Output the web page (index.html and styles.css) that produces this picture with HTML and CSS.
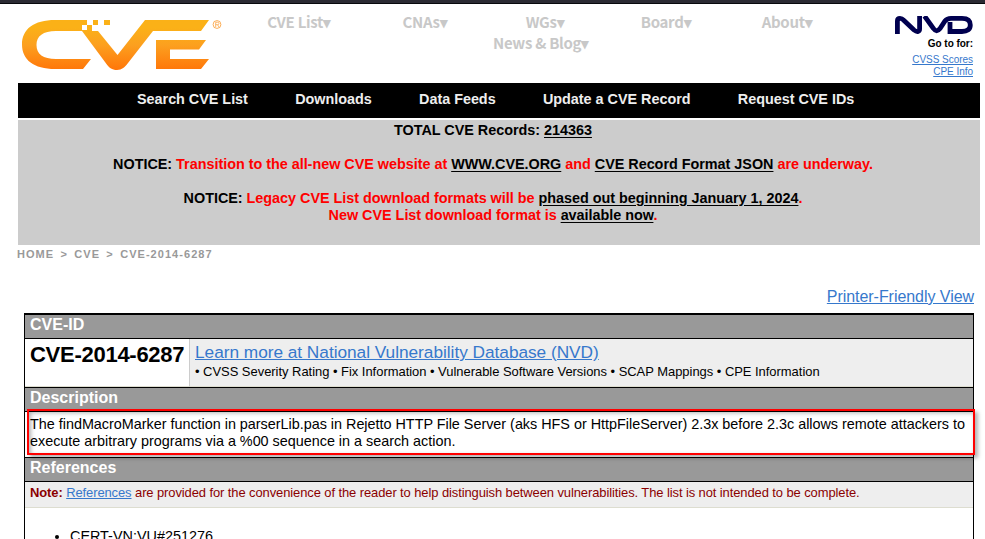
FILE: index.html
```html
<!DOCTYPE html>
<html lang="en">
<head>
<meta charset="utf-8">
<title>CVE - CVE-2014-6287</title>
<link rel="stylesheet" href="styles.css">
</head>
<body>
<div class="topbar"></div>
<header class="header">
  <svg class="logo" viewBox="0 0 202 52" width="202" height="52" role="img" aria-label="CVE">
    <defs><linearGradient id="g" x1="0" y1="0" x2="0" y2="1"><stop offset=".15" stop-color="#fbb117"/><stop offset=".5" stop-color="#fca01f"/><stop offset="1" stop-color="#ff7609"/></linearGradient></defs>
    <path fill="url(#g)" d="M65 1H33C12 1 0 10 0 25.500C0 41 12 50 33 50H61L69 40H34C21 40 14.500 35 14.500 26C14.500 17 21 12 34 12H60L83 43C87 49 90 51 95 51C100 51 103 48 106 44L131 12H179L187 1H123L95.500 36L76 12H70V6H65ZM134 21H184L177 30.500H148V40H187L179 50H134Z"/>
    <path fill="#fff" d="M60 6H65V11H60ZM65 1H70V6H65ZM70 6H76V11H70Z"/>
    <path fill="#fbb117" d="M71 1H76V6H71ZM82 1H88V6H82ZM65 6H70V11H65Z"/>
    <circle cx="195" cy="5.500" r="3.900" fill="none" stroke="#fba545" stroke-width=".9"/>
    <path fill="none" stroke="#fba545" stroke-width=".8" d="M193.700 8V3.300H195.500Q197 3.300 197 4.500T195.500 5.700H193.700M195.500 5.700L197 8"/>
  </svg>
  <nav class="menu">
    <a>CVE List<i>▾</i></a><a>CNAs<i>▾</i></a><a>WGs<i>▾</i></a><a>Board<i>▾</i></a><a>About<i>▾</i></a><a class="m6">News &amp; Blog<i>▾</i></a>
  </nav>
  <div class="nvd">
    <svg viewBox="0 0 78 18" width="78" height="18" role="img" aria-label="NVD"><path fill="none" stroke="#00004f" stroke-width="4.800" d="M2.400 18V5Q2.400 2.400 5 2.400Q7 2.400 9 4.500L19 14Q21.500 16 23 15.500Q24.600 15 24.600 13V0M29.500 0L38.500 12.500Q41.500 17 45 12.500L50 5Q52 2.400 56 2.400H67Q75.300 2.400 75.300 9Q75.300 15.500 67 15.500H55V6"/></svg>
    <b>Go to for:</b>
    <a>CVSS Scores</a>
    <a>CPE Info</a>
  </div>
</header>
<nav class="mainnav"><a>Search CVE List</a><a>Downloads</a><a>Data Feeds</a><a>Update a CVE Record</a><a>Request CVE IDs</a></nav>
<section class="notice">
  <p>TOTAL CVE Records: <a>214363</a></p>
  <p>NOTICE: <em>Transition to the all-new CVE website at <a>WWW.CVE.ORG</a> and <a>CVE Record Format JSON</a> are underway.</em></p>
  <p>NOTICE: <em>Legacy CVE List download formats will be <a>phased out beginning January 1, 2024</a>.<br>New CVE List download format is <a>available now</a>.</em></p>
</section>
<div class="crumbs"><span>HOME</span><span>&gt;</span><span>CVE</span><span>&gt;</span><span>CVE-2014-6287</span></div>
<div class="printer"><a>Printer-Friendly View</a></div>
<main class="record">
  <h2>CVE-ID</h2>
  <div class="idrow">
    <div class="cveid">CVE-2014-6287</div>
    <div class="learn"><a>Learn more at National Vulnerability Database (NVD)</a><span>• CVSS Severity Rating • Fix Information • Vulnerable Software Versions • SCAP Mappings • CPE Information</span></div>
  </div>
  <h2>Description</h2>
  <div class="desc"><p>The findMacroMarker function in parserLib.pas in Rejetto HTTP File Server (aks HFS or HttpFileServer) 2.3x before 2.3c allows remote attackers to<br>execute arbitrary programs via a %00 sequence in a search action.</p><div class="highlight"></div></div>
  <h2>References</h2>
  <div class="note"><b>Note:</b> <a>References</a> <span>are provided for the convenience of the reader to help distinguish between vulnerabilities. The list is not intended to be complete.</span></div>
  <ul><li>CERT-VN:VU#251276</li></ul>
</main>
</body>
</html>
```
FILE: styles.css
```css
* { box-sizing: border-box; }
html, body { height: 539px; overflow: hidden; }
body { margin: 0; background: #fff; color: #000; font: 14.4px/17px "Liberation Sans", Arial, sans-serif; white-space: nowrap; }
p { margin: 0; }
.topbar { height: 4px; background: #2b2a33; border-bottom: 1px solid #08080c; }
.header { display: flex; height: 79px; }
.logo { flex: none; margin: 15px 0 0 22px; }
.menu { display: grid; grid-template-columns: 118px 134px 106px 136px 106px; grid-auto-rows: 21px; width: 600px; margin: 7px 0 0 16px; flex: none; justify-items: center; color: #c8c8c8; font: 700 15px/21px "Noto Sans CJK SC", sans-serif; letter-spacing: -.3px; }
.menu i { font: 600 15px/1 "Noto Sans", sans-serif; }
.m6 { grid-column: 1 / -1; margin-left: 2px; }
.nvd { width: 133px; padding-top: 12px; display: flex; flex-direction: column; align-items: flex-end; font-size: 10px; line-height: 12px; letter-spacing: -.03px; }
.nvd svg { display: block; flex: none; }
.nvd b { margin: 4px 0; }
.nvd a, .printer a, .learn a, .note a { color: #3678cc; text-decoration: underline; }
.mainnav { height: 35px; margin: 0 5px 2px 18px; padding: 0 0 3px 119px; display: flex; align-items: center; gap: 47.300px; background: #000; color: #eee; font-weight: bold; letter-spacing: -.02px; }
.notice { height: 125px; margin: 0 5px 0 18px; padding: 2px 12px 0 0; display: flex; flex-direction: column; gap: 17px; background: #ccc; text-align: center; font-weight: bold; letter-spacing: -.02px; }
.notice em { color: #f00; font-style: normal; }
.notice a { color: #000; text-decoration: underline; text-underline-offset: 2px; }
.crumbs { display: flex; gap: 6.300px; margin: 2px 0 0 17px; height: 15px; color: #999; font-weight: bold; font-size: 11px; line-height: 15px; letter-spacing: 1.050px; }
.printer { height: 51px; padding: 25px 11px 0 0; text-align: right; font-size: 16px; line-height: 20px; letter-spacing: -.05px; }
.record { margin: 0 11px 0 24px; height: 240px; border: 1px solid #000; border-width: 2px 1px 0; }
h2 { margin: 0; height: 24px; padding: 0 5px; border-bottom: 1px solid #000; background: #999; color: #fff; font-size: 16px; line-height: 19px; }
.idrow { display: flex; height: 49px; border-bottom: 1px solid #000; }
.cveid { width: 165px; padding: 3px 0 0 5px; border-right: 1px solid #ccc; border-bottom: 1px solid #ddddd0; font-size: 22px; line-height: 26px; font-weight: bold; letter-spacing: -.27px; }
.learn { flex: 1; display: flex; flex-direction: column; padding: 3px 0 0 5px; background: #eee; border-bottom: 1px solid #ddddd0; }
.learn a { font-size: 17.280px; line-height: 20px; letter-spacing: -.03px; }
.learn span { font-size: 12.960px; line-height: 20px; letter-spacing: -.02px; }
.desc { position: relative; height: 46px; padding: 4px 5px; border-bottom: 1px solid #000; letter-spacing: -.015px; }
.highlight { position: absolute; left: 2px; right: -2px; top: -3px; height: 46px; border: 2px solid #f00; box-shadow: 3px 3px 4px rgba(0,0,0,.3), inset 2px 2px 4px rgba(0,0,0,.3); }
.note { height: 26px; padding: 2px 5px; background: #eee; border-bottom: 1px solid #ddddd0; color: #8b0000; font-size: 12.960px; line-height: 18px; letter-spacing: -.09px; }
ul { margin: 20px 0 0; padding-left: 45px; }
```
